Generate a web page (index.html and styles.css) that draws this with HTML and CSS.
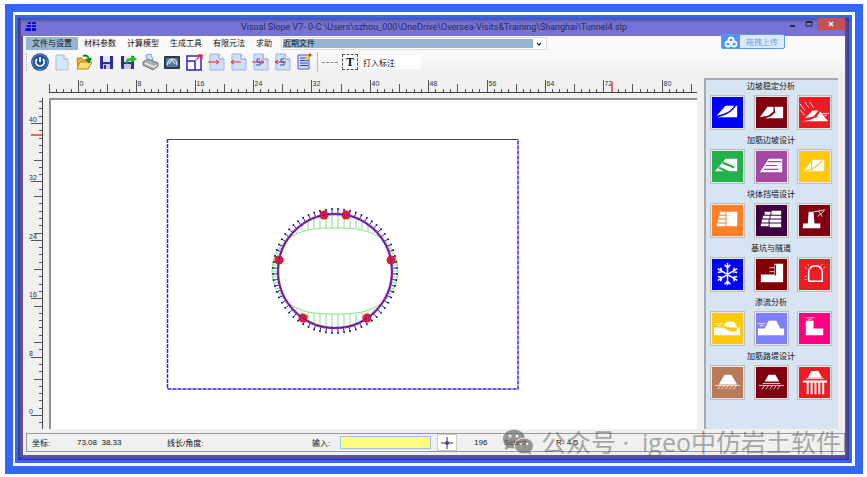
FILE: index.html
```html
<!DOCTYPE html>
<html lang="zh-CN">
<head>
    <meta charset="UTF-8">
    <meta name="viewport" content="width=device-width, initial-scale=1.0">
    <title>Visual Slope V7</title>
    <link rel="stylesheet" href="styles.css">
</head>
<body>
    <div class="frame">
        <div class="window">
            <header class="titlebar">
                <svg class="logo" viewBox="0 0 12 12"><path d="M3 1h3v2H2.500zM7 1h4v2H7zM2 4h4v2H1.500zM7 4h4v2H7zM1 7h5v3H0zM7 7h4v3H7z" fill="#0a0ad0"/></svg>
                <h1>Visual Slope V7- 0-C:\Users\szhou_000\OneDrive\Oversea-Visits&amp;Training\Shanghai\Tunnel4.slp</h1>
                <div class="winbtns">
                    <button aria-label="Minimize"><svg viewBox="0 0 8 8"><path d="M1 6h5" stroke="#111" stroke-width="1.500"/></svg></button>
                    <button aria-label="Maximize"><svg viewBox="0 0 8 8"><path d="M1 2h6v4H1z" fill="none" stroke="#222"/><path d="M1 2h6" stroke="#222" stroke-width="1.500"/></svg></button>
                    <button class="close" aria-label="Close"><svg viewBox="0 0 8 8"><path d="M2 2l4 4M6 2L2 6" stroke="#fff" stroke-width="1.300"/></svg></button>
                </div>
            </header>

            <div class="content">
                <nav class="menu">
                    <button class="active">文件与设置</button>
                    <button>材料参数</button>
                    <button>计算模型</button>
                    <button>生成工具</button>
                    <button>有限元法</button>
                    <button>求助</button>
                    <div class="combo">
                        <select aria-label="近期文件"><option>近期文件</option></select>
                        <svg viewBox="0 0 12 10"><path d="M4 4l2 2 2-2" fill="none" stroke="#333" stroke-width="1.300"/></svg>
                    </div>
                </nav>

                <div class="toolbar">
                    <span class="grip"></span>
                    <button aria-label="Power"><svg viewBox="0 0 18 18"><circle cx="9" cy="9" r="8.800" fill="#123c7c"/><circle cx="9" cy="9" r="7.500" fill="#1d50a0" stroke="#6d93c4"/><path d="M6 6a4.200 4.200 0 1 0 6 0M9 4v5" fill="none" stroke="#fff" stroke-width="1.800"/></svg></button>
                    <button aria-label="New"><svg viewBox="0 0 18 18"><path d="M3 2h8l4 4v11H3z" fill="#d5e8fb" stroke="#a9c0d8"/><path d="M11 2v4h4" fill="#fff" stroke="#93abc4"/></svg></button>
                    <button aria-label="Open"><svg viewBox="0 0 18 18"><path d="M2 5h5l1 2h6v8H3z" fill="#e8b83a" stroke="#b98618"/><path d="M5 9h12l-4 7H2z" fill="#ffdc70" stroke="#b98618"/><path d="M8 3q5-2 6 4M11 6l3 3 2-4" fill="none" stroke="#138b1c" stroke-width="2"/></svg></button>
                    <button aria-label="Save"><svg viewBox="0 0 18 18"><path d="M3 3h13v13H4l-1-1z" fill="#2d2d9f"/><path d="M6 3h7v6H6z" fill="#e4e7f8"/><path d="M6 11h7v5H6z" fill="#c8c8e0"/><path d="M7 12h2v4H7z" fill="#2d2d9f"/></svg></button>
                    <button aria-label="Save as"><svg viewBox="0 0 18 18"><path d="M2 3h13v13H3l-1-1z" fill="#2d2d9f"/><path d="M5 3h7v6H5z" fill="#e4e7f8"/><path d="M5 11h7v5H5z" fill="#c8c8e0"/><path d="M7 11V8q0-3 5-3V2l6 4-6 4V7.500Q8 8 8 11z" fill="#16c21d"/></svg></button>
                    <button aria-label="Print"><svg viewBox="0 0 18 18"><path d="M5 2l5-1 2 6-5 3z" fill="#cfe4ff" stroke="#8aa5c5"/><path d="M2 9l5-3 10 4v3l-5 4L2 12z" fill="#a8acb0" stroke="#707579"/><path d="M4 10l9 4 3-2" fill="none" stroke="#eee" stroke-width="1.500"/></svg></button>
                    <button aria-label="Snapshot"><svg viewBox="0 0 18 18"><rect x="1" y="3" width="16" height="13" rx="1" fill="#303a42"/><rect x="3" y="5" width="12" height="9" fill="#557a9a"/><path d="M4 12q2-7 6-6 4 1 4 6M6 11l3-4 3 4" fill="none" stroke="#dbe7f0" stroke-width="1.200"/></svg></button>
                    <button aria-label="Scale"><svg viewBox="0 0 18 18"><path d="M2 3h14v14H2zM2 8h8v9" fill="#fff" stroke="#2525cf" stroke-width="1.500"/><path d="M11 7l5-5M13 2h4v4" fill="none" stroke="#f22" stroke-width="1.300"/></svg></button>
                    <button aria-label="Next page"><svg viewBox="0 0 18 18"><path class="sheet" d="M3 1h9l5 5v11H3z"/><path class="fold" d="M12 1v5h5"/><path class="mark" d="M1 9h10M9 7l3 2-3 2"/></svg></button>
                    <button aria-label="Previous page"><svg viewBox="0 0 18 18"><path class="sheet" d="M3 1h9l5 5v11H3z"/><path class="fold" d="M12 1v5h5"/><path class="mark" d="M2 9h10M5 7L2 9l3 2"/></svg></button>
                    <button aria-label="Next step"><svg viewBox="0 0 18 18"><path class="sheet" d="M3 1h9l5 5v11H3z"/><path class="fold" d="M12 1v5h5"/><path class="mark" d="M1 9h11M10 7l3 2-3 2"/><path class="step" d="M9 6H6v3h3v3H5"/></svg></button>
                    <button aria-label="Previous step"><svg viewBox="0 0 18 18"><path class="sheet" d="M3 1h9l5 5v11H3z"/><path class="fold" d="M12 1v5h5"/><path class="mark" d="M2 9h11M5 7L2 9l3 2"/><path class="step" d="M11 6H8v3h3v3H7"/></svg></button>
                    <button aria-label="Report"><svg viewBox="0 0 18 18"><path d="M3 2h11v14H3z" fill="#d6dcff" stroke="#5557d6"/><path d="M5 5h6M5 7.500h8M5 10h8M5 12.500h8" stroke="#3336c7" stroke-width="1.200"/><path d="M10 7l5-5" stroke="#e8d030" stroke-width="2.500"/><path d="M14 3l2-2" stroke="#e33" stroke-width="2.500"/></svg></button>
                    <span class="sep"></span>
                    <span class="dashes"></span>
                    <button class="texttool" aria-label="Text"><span>T</span></button>
                    <input class="note" type="text" value="打入标注" aria-label="标注">
                </div>

                <div class="workspace">
                    <div class="drawing">
                        <svg class="ruler-h" id="rulerH"></svg>
                        <svg class="ruler-v" id="rulerV"></svg>
                        <svg class="canvas" id="canvas"></svg>
                    </div>
                    <aside class="palette">
                        <section>
                            <h2>边坡稳定分析</h2>
                            <div class="tiles">
                                <button class="blue" aria-label="边坡 1"><svg viewBox="0 0 32 32"><path d="M5 19L14 9h9q-4 7-17 10z"/><path d="M9 20q11-3 16-11h1v12H5z"/></svg></button>
                                <button class="maroon" aria-label="边坡 2"><svg viewBox="0 0 32 32"><path d="M4 21l8-11h6v5l-5 4z"/><path d="M9 22l6-2 5-4-1-6h9v12z"/></svg></button>
                                <button class="red" aria-label="边坡 3"><svg viewBox="0 0 32 32"><path d="M2 25l8-1 8-3 4-6 8 10z"/><path d="M6 22l8-8h6l-5 6z"/><path class="line" d="M1 7l5 7M6 5l4 6M11 5l4 6M1 13l5 6M24 17h7M26 19h3"/></svg></button>
                            </div>
                        </section>
                        <section>
                            <h2>加筋边坡设计</h2>
                            <div class="tiles">
                                <button class="green" aria-label="加筋 1"><svg viewBox="0 0 32 32"><path d="M3 21L14 8h12v13z"/><path class="cut thick" d="M11 12l12 5M7 17l10 5"/></svg></button>
                                <button class="purple" aria-label="加筋 2"><svg viewBox="0 0 32 32"><path d="M4 22L13 8h14v14z"/><path class="cut" d="M12 11h14M10 15h12M8 19h15"/></svg></button>
                                <button class="gold" aria-label="加筋 3"><svg viewBox="0 0 32 32"><path d="M5 21L14 9h12v12z"/><path class="cut" d="M6 21q11-2 18-11M13 10v11"/></svg></button>
                            </div>
                        </section>
                        <section>
                            <h2>块体挡墙设计</h2>
                            <div class="tiles">
                                <button class="orange" aria-label="挡墙 1"><svg viewBox="0 0 32 32"><path d="M15 7h11v15H15zM8 7h6v3H8zM7 11h7v3H7zM6 15h8v3H6zM5 19h9v3H5z"/></svg></button>
                                <button class="plum" aria-label="挡墙 2"><svg viewBox="0 0 32 32"><path d="M9 7h6v3H9zM7 11h7v3H7zM6 15h7v3H6zM5 19h8v3H5zM16 6h10v4H16zM15 11h11v3H15zM14 15h12v3H14zM14 19h12v4H14z"/></svg></button>
                                <button class="maroon" aria-label="挡墙 3"><svg viewBox="0 0 32 32"><path d="M10 7h5l1 12h6v5H4v-5h5z"/><path class="line" d="M15 7l12-2M20 6l4 6M19 12l7-6"/></svg></button>
                            </div>
                        </section>
                        <section>
                            <h2>基坑与隧道</h2>
                            <div class="tiles">
                                <button class="blue" aria-label="冻结"><svg viewBox="0 0 32 32"><path class="line bold" d="M16 4v23M6 10l20 12M26 10L6 22M13 6l3 3 3-3M13 26l3-3 3 3M6 14l4-1-1-4M26 14l-4-1 1-4M6 18l4 1-1 4M26 18l-4 1 1 4"/></svg></button>
                                <button class="maroon2" aria-label="基坑"><svg viewBox="0 0 32 32"><path d="M5 16h14V5h9v19H5z"/><path class="line" d="M14 9h5M14 13h5"/><path class="cut" d="M20 6v11"/></svg></button>
                                <button class="red" aria-label="隧道"><svg viewBox="0 0 32 32"><path class="line bold" d="M10 23V14q0-6 6-7h2q6 1 6 7v9z"/><path class="line" d="M8 10l-2-2M10 7L9 5M25 10l2-2M23 7l1-2M8 18H6M8 21H6"/></svg></button>
                            </div>
                        </section>
                        <section>
                            <h2>渗流分析</h2>
                            <div class="tiles">
                                <button class="gold" aria-label="渗流 1"><svg viewBox="0 0 32 32"><path d="M2 15h9l8 4h6l1-4h3v8H2z"/><path d="M12 13l3-4h8l3 6h-7z"/><path class="line" d="M3 11h8M5 13h4"/></svg></button>
                                <button class="lilac" aria-label="渗流 2"><svg viewBox="0 0 32 32"><path d="M2 16h7l4-8h8l4 8h4v7H2z"/><path class="line" d="M2 11h8M4 13h4"/></svg></button>
                                <button class="pink" aria-label="渗流 3"><svg viewBox="0 0 32 32"><path d="M7 8h8v8h10v7H7z"/><path class="line" d="M6 5h10M9 7h4"/></svg></button>
                            </div>
                        </section>
                        <section>
                            <h2>加筋路堤设计</h2>
                            <div class="tiles">
                                <button class="brown" aria-label="路堤 1"><svg viewBox="0 0 32 32"><path d="M7 18l6-10h7l6 10z"/><path class="line" d="M3 19h26M9 19l-3 4M13 19l-3 4M17 19l-3 4M21 19l-3 4M25 19l-3 4"/></svg></button>
                                <button class="maroon" aria-label="路堤 2"><svg viewBox="0 0 32 32"><path d="M9 15l4-7h7l4 7z"/><path class="line" d="M7 17h18M3 19h26M9 19l-3 4M13 19l-3 4M17 19l-3 4M21 19l-3 4M25 19l-3 4"/></svg></button>
                                <button class="red" aria-label="路堤 3"><svg viewBox="0 0 32 32"><path d="M9 11l4-7h7l4 7zM4 14h25v2H4zM8 16h2v12H8zM12 16h2v12h-2zM16 16h2v12h-2zM20 16h2v12h-2zM24 16h2v12h-2z"/><path class="line" d="M7 12h19"/></svg></button>
                            </div>
                        </section>
                    </aside>
                </div>

                <footer class="status">
                    <span class="coord-label">坐标:</span>
                    <span class="coord">73.08&nbsp; 38.33</span>
                    <span class="angle">线长/角度:</span>
                    <label for="cmd">输入:</label>
                    <input id="cmd" type="text">
                    <button class="cross" aria-label="Pick point"><svg viewBox="0 0 14 14"><path d="M7 1v12M1 7h12" stroke="#333"/><circle cx="7" cy="7" r="2" fill="#4040cc"/></svg></button>
                    <span class="count">196</span>
                    <span class="mode">Select</span>
                    <span>R- 4-5</span>
                </footer>
            </div>

            <button class="upload">
                <svg viewBox="0 0 18 14"><g fill="none" stroke="#fff" stroke-width="1.800"><circle cx="9" cy="5" r="2.500"/><circle cx="6" cy="9" r="2.500"/><circle cx="12" cy="9" r="2.500"/></g></svg>
                <span>拖拽上传</span>
            </button>
            <div class="watermark">
                <svg viewBox="0 0 32 26"><ellipse cx="12" cy="10" rx="11" ry="9.500"/><path d="M4 16l-1 5 6-3z"/><ellipse class="front" cx="22" cy="17" rx="9.500" ry="8"/><path d="M25 23l4 3-1-5z"/><g class="eyes"><circle cx="8" cy="7" r="1.500"/><circle cx="15" cy="7" r="1.500"/><circle cx="19" cy="15" r="1.300"/><circle cx="25" cy="15" r="1.300"/></g></svg>
                <span>公众号 ·&nbsp; igeo中仿岩土软件</span>
            </div>
        </div>
    </div>
<script>
    const NS = "http://www.w3.org/2000/svg"

    function add(parent, name, attrs, text) {
        const el = document.createElementNS(NS, name)
        for (const key in attrs) {
            el.setAttribute(key, attrs[key])
        }
        if (text !== undefined) {
            el.textContent = text
        }
        parent.appendChild(el)
    }

    function line(parent, x1, y1, x2, y2, cls) {
        add(parent, "line", { x1, y1, x2, y2, class: cls })
    }

    // top ruler: one tick per unit
    function drawRulerH() {
        const svg = document.getElementById("rulerH")
        line(svg, 0, 14.5, 648, 14.5, "axis")
        for (let k = -4; k <= 84; k++) {
            const x = Math.round(29 + k * 7.295) + 0.5
            const major = k % 8 === 0
            const top = major ? 2 : k % 4 === 0 ? 6 : 11
            line(svg, x, top, x, 14, "tick")
            if (major) {
                add(svg, "text", { x: x + 1, y: 8 }, k)
            }
        }
        line(svg, 563, 4, 563, 14, "cursor")
    }

    // left ruler: zero is near the bottom
    function drawRulerV() {
        const svg = document.getElementById("rulerV")
        line(svg, 16.5, 0, 16.5, 332, "axis")
        for (let k = -2; k <= 43; k++) {
            const y = Math.round(317 - k * 7.3) + 0.5
            const major = k % 8 === 0
            const left = major ? 5 : k % 5 === 0 ? 8 : 13
            line(svg, left, y, 16, y, "tick")
            if (major) {
                add(svg, "text", { x: 3, y: y - 2 }, k)
            }
        }
        line(svg, 5, 37, 16, 37, "cursor")
    }

    function drawModel() {
        const svg = document.getElementById("canvas")
        const cx = 284, cy = 171, r = 57
        line(svg, 116, 39.5, 467, 39.5, "soil-top")
        add(svg, "path", { d: "M116.500 39V289H467V39", class: "soil" })

        // moment diagram
        const n = 64
        let d = ""
        for (let i = 0; i < n; i++) {
            const a = i * 2 * Math.PI / n
            const m = r - 4 - 10 * Math.cos(2 * a)
            const x = cx + m * Math.sin(a)
            const y = cy - m * Math.cos(a)
            d += (i ? "L" : "M") + x + " " + y
            if (Math.abs(Math.cos(a)) < 0.75) {
                line(svg, cx + r * Math.sin(a), cy - r * Math.cos(a), x, y, "moment")
            }
        }
        add(svg, "path", { d: d + "Z", class: "moment" })
        for (let x = -33; x <= 33; x += 6) {
            const y = Math.sqrt(r * r - x * x)
            const end = 43 - Math.max(0, Math.abs(x) - 22) * 0.25
            line(svg, cx + x, cy - y, cx + x, cy - end, "moment")
            line(svg, cx + x, cy + y, cx + x, cy + end, "moment")
        }

        for (let i = 0; i < n; i++) {
            const a = (i + 0.5) * 2 * Math.PI / n
            const s = Math.sin(a), c = Math.cos(a)
            line(svg, cx + r * s, cy - r * c, cx + 62 * s, cy - 62 * c, "spring")
            add(svg, "circle", { cx: cx + 62 * s, cy: cy - 62 * c, r: 1, class: "node" })
        }
        const joints = [[-11, -56], [11, -56], [-56, -11], [56, -11], [-32, 47], [32, 47]]
        joints.forEach(p => {
            add(svg, "circle", { cx: cx + p[0], cy: cy + p[1], r: 4.5, class: "joint" })
        })
        add(svg, "circle", { cx, cy, r, class: "lining" })
        add(svg, "circle", { cx, cy, r, class: "lining-dash" })
    }

    drawRulerH()
    drawRulerV()
    drawModel()
</script>
</body>
</html>
```
FILE: styles.css
```css
* {
    box-sizing: border-box;
}
body {
    margin: 0;
    padding: 4px 4px 3px 5px;
    height: 100vh;
    background: white;
    font-family: "Liberation Sans", "Noto Sans CJK SC", sans-serif;
    font-size: 8px;
    color: #111;
}
button, input, select {
    font: inherit;
    color: inherit;
    margin: 0;
    padding: 0;
    border: none;
    background: none;
}
h1, h2 {
    margin: 0;
    font-weight: 400;
}
svg {
    display: block;
}
.frame {
    height: 100%;
    border: 8px solid #3366ff;
    padding: 3px 3px 3px 2px;
}
.window {
    position: relative;
    height: 100%;
    border: 3px solid #3366ff;
    padding-bottom: 5px;
    display: flex;
    flex-direction: column;
    background: #5f59ae;
    box-shadow: inset 0 0 4px 1px #2c2960;
}

/* title bar */
.titlebar {
    height: 18px;
    flex: none;
    display: flex;
    align-items: center;
    margin: 0 4px 0 3px;
    padding-left: 4px;
    background: linear-gradient(#4f4a9c, #7672d6 5px);
}
.logo {
    width: 12px;
    height: 12px;
}
.titlebar h1 {
    flex: 1;
    padding-left: 46px;
    text-align: center;
    font-family: Roboto, sans-serif;
    font-size: 9px;
    line-height: 18px;
    color: #2c2a50;
    white-space: nowrap;
}
.winbtns {
    display: flex;
    align-self: flex-start;
}
.winbtns button {
    width: 16px;
    height: 12px;
    display: flex;
    align-items: center;
    justify-content: center;
}
.winbtns svg {
    width: 8px;
    height: 8px;
}
.winbtns .close {
    width: 28px;
    background: #c75050;
}

.content {
    flex: 1;
    min-height: 0;
    display: flex;
    flex-direction: column;
    margin: 0 4px 0 5px;
    padding: 0 0 3px 3px;
    background: #f0f0f0;
}

/* menu and toolbar */
.menu {
    height: 14px;
    flex: none;
    display: flex;
    align-items: center;
    padding-top: 1px;
    background: #fafafa;
}
.menu > button {
    height: 13px;
    line-height: 12px;
    padding: 0 5px;
    margin-right: 1px;
    white-space: nowrap;
}
.menu .active {
    padding: 0 6px;
    background: #99b4d1;
}
.combo {
    display: flex;
    align-items: center;
    width: 266px;
    height: 13px;
    margin-left: 3px;
    padding: 1px;
    background: white;
    border: 1px solid #ddd;
}
.combo select {
    flex: 1;
    height: 9px;
    line-height: 9px;
    appearance: none;
    background: #99b4d1;
}
.combo svg {
    width: 12px;
    height: 10px;
}
.toolbar {
    height: 26px;
    flex: none;
    display: flex;
    align-items: center;
    padding-bottom: 2px;
    background: linear-gradient(#fbfbfb, #f0f0f0);
}
.toolbar button {
    width: 18px;
    height: 18px;
    margin-right: 4px;
}
.grip {
    height: 18px;
    margin-right: 4px;
    border-left: 1px dotted #aaa;
}
.sheet {
    fill: #cfe0f6;
    stroke: #9db6d6;
}
.fold {
    fill: white;
    stroke: #7e9ac0;
}
.mark {
    fill: none;
    stroke: #e8283c;
}
.step {
    fill: none;
    stroke: #3b3bd0;
}
.sep {
    height: 20px;
    border-left: 1px solid #bbb;
}
.dashes {
    width: 16px;
    margin: 0 4px;
    border-top: 1px dashed #888;
}
.toolbar .texttool {
    width: 16px;
    height: 16px;
    margin: 0 3px 0 0;
    border: 1px dashed #555;
    background: white;
    font: bold 12px/14px "Liberation Serif", serif;
}
.note {
    width: 60px;
    height: 14px;
    padding-left: 2px;
    background: white;
}

/* work area */
.workspace {
    flex: 1;
    min-height: 0;
    display: flex;
    margin-bottom: 4px;
    padding-top: 2px;
}
.drawing {
    flex: 1;
    min-width: 0;
    display: grid;
    grid-template: 20px 1fr / 23px 1fr;
}
.drawing svg {
    width: 100%;
    height: 100%;
    overflow: hidden;
}
.ruler-h {
    grid-column: 2;
}
.drawing text {
    font-size: 7px;
    fill: #333;
}
.axis {
    stroke: #444;
}
.tick {
    stroke: #555;
}
.drawing .cursor {
    stroke: #f06060;
    stroke-width: 2;
}
.canvas {
    background: white;
    border-top: 2px solid #929292;
    border-left: 2px solid #929292;
}
.soil-top {
    stroke: #444466;
}
.soil {
    fill: none;
    stroke: #2a2ae0;
    stroke-width: 1.5;
    stroke-dasharray: 4 1;
}
.moment {
    fill: none;
    stroke: #68d868;
    stroke-width: 0.8;
}
.joint {
    fill: #ff1010;
}
.lining {
    fill: none;
    stroke: #a030b8;
    stroke-width: 2.4;
}
.lining-dash {
    fill: none;
    stroke: #26267a;
    stroke-dasharray: 4 1;
}
.spring {
    stroke: #333;
    stroke-width: 1;
}
.node {
    fill: #1818d0;
}

/* module buttons */
.palette {
    width: 134px;
    flex: none;
    margin: 0 7px;
    padding: 0 6px 0 4px;
    background: #d7e4f2;
    border-top: 2px solid #a5aab0;
    border-left: 2px solid #a5aab0;
}
.palette h2 {
    height: 15px;
    line-height: 14px;
    font-size: 8px;
    text-align: center;
}
.tiles {
    display: flex;
    justify-content: space-between;
    margin-bottom: 4px;
}
.tiles button {
    width: 35px;
    height: 35px;
    border: 1px solid #bdbdbd;
    padding: 1px;
    background-clip: content-box;
    background-color: var(--tile);
    box-shadow: inset 0 0 0 1px #e8e8e8;
}
.tiles svg {
    width: 100%;
    height: 100%;
    fill: white;
}
.tiles .line {
    fill: none;
    stroke: white;
    stroke-width: 0.8;
}
.tiles .bold {
    stroke-width: 1.6;
}
.tiles .cut {
    fill: none;
    stroke: var(--tile);
    stroke-width: 1.2;
}
.tiles .thick {
    stroke-width: 2.4;
}
.blue { --tile: #0000ff; }
.maroon { --tile: #800010; }
.maroon2 { --tile: #800000; }
.red { --tile: #ed1c24; }
.green { --tile: #22b14c; }
.purple { --tile: #a349a4; }
.gold { --tile: #ffc90e; }
.orange { --tile: #ff7f27; }
.plum { --tile: #400040; }
.lilac { --tile: #8080ff; }
.pink { --tile: #ff0080; }
.brown { --tile: #b97a57; }

/* status bar */
.status {
    height: 19px;
    flex: none;
    display: flex;
    align-items: center;
    padding-left: 5px;
    border: 1px solid #999;
    white-space: nowrap;
}
.coord-label {
    width: 45px;
}
.coord {
    width: 90px;
}
.angle {
    width: 145px;
}
.status label {
    width: 28px;
}
.status input {
    width: 91px;
    height: 13px;
    background: #ffff80;
    border: 1px solid #9cc3e6;
}
.cross {
    width: 20px;
    height: 17px;
    margin: 0 17px 0 6px;
    padding: 1px 2px;
    background: white;
    border: 1px solid #ccc;
}
.count {
    width: 30px;
}
.mode {
    width: 52px;
}

/* floating items */
.upload {
    position: absolute;
    top: 16px;
    right: 64px;
    width: 64px;
    height: 15px;
    display: flex;
    align-items: center;
    border: 1px solid #5b9cf5;
    border-radius: 2px;
    background: #dceaff;
    color: #6a9ff0;
    overflow: hidden;
}
.upload svg {
    width: 18px;
    height: 14px;
    background: #4a94ff;
}
.upload span {
    flex: 1;
}
.watermark {
    position: absolute;
    right: 8px;
    bottom: 2px;
    display: flex;
    align-items: center;
    gap: 7px;
    font-family: "Open Sans", "Noto Sans CJK SC", sans-serif;
    font-size: 25px;
    line-height: 32px;
    color: rgba(90, 90, 90, 0.5);
    white-space: nowrap;
    pointer-events: none;
}
.watermark svg {
    width: 32px;
    height: 26px;
    fill: #666;
    opacity: 0.65;
}
.watermark .front {
    stroke: #f0f0f0;
}
.watermark .eyes {
    fill: #f0f0f0;
}
```
